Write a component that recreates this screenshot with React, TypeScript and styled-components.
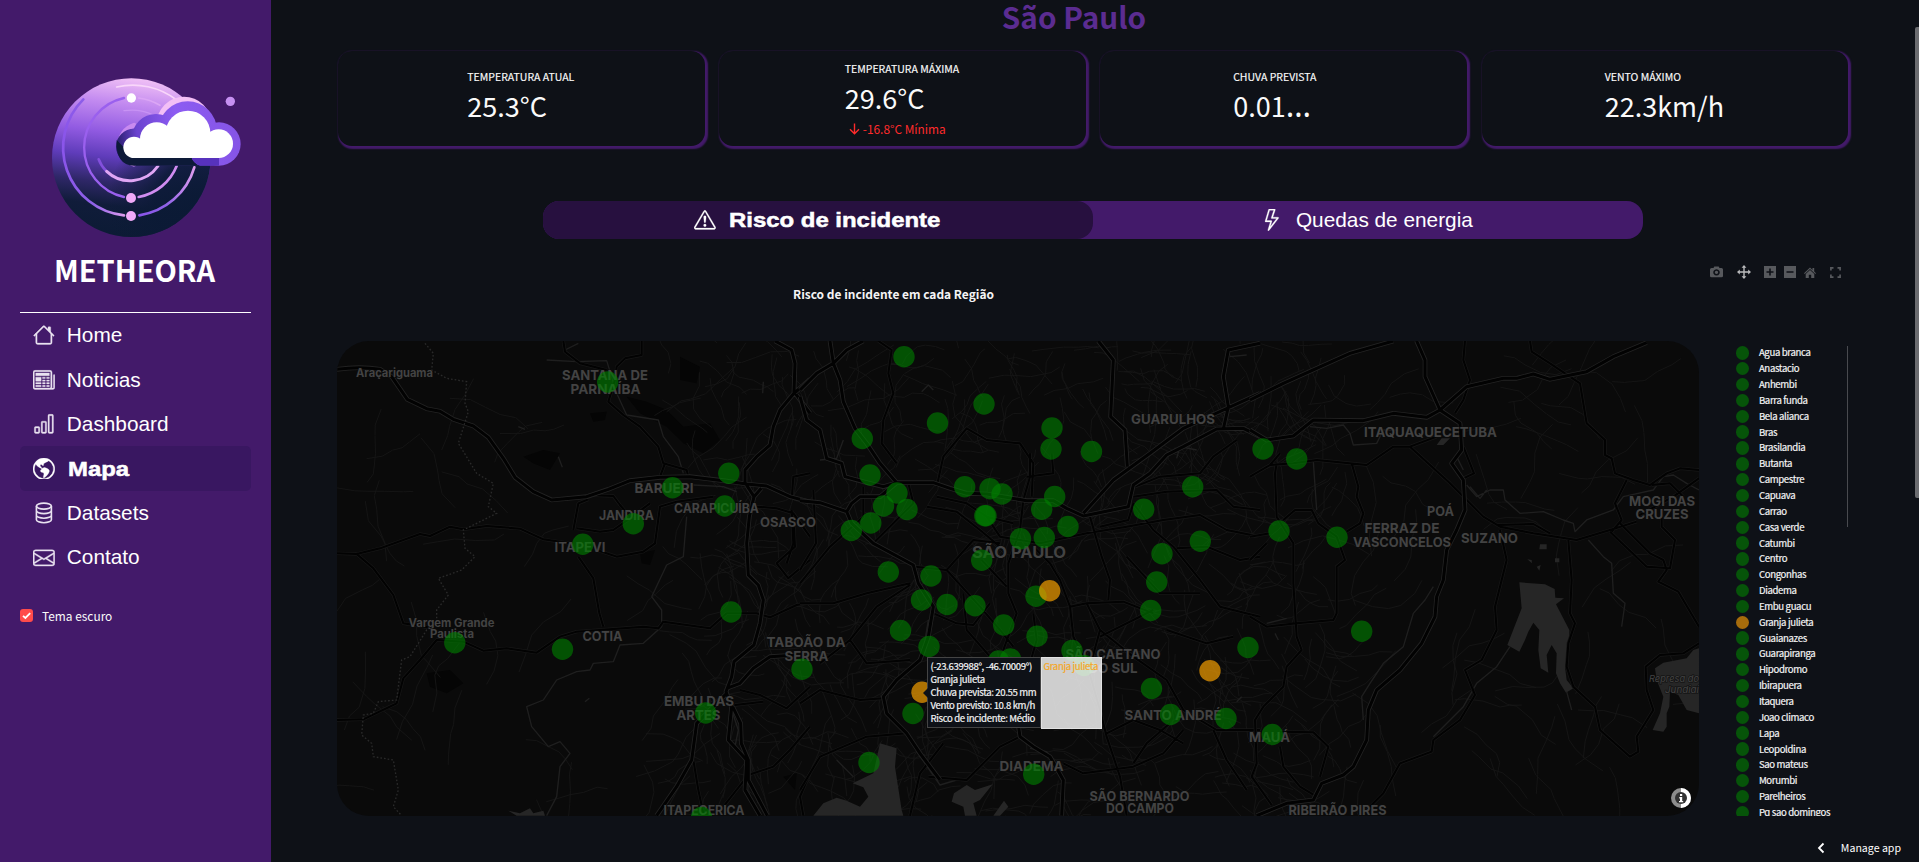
import React from "react";
import styled, { createGlobalStyle } from "styled-components";
import {
  BsBarChart,
  BsEnvelope,
  BsExclamationTriangle,
  BsGlobeAmericas,
  BsLightning,
  BsNewspaper,
} from "react-icons/bs";

const SANS = `"Noto Sans CJK SC", "Noto Sans", sans-serif`;
const ARIAL = `"Liberation Sans", Arial, sans-serif`;

const GlobalStyle = createGlobalStyle`
  * { box-sizing: border-box; }
  body { margin: 0; background: #0e1117; overflow: hidden; color: #fafafa; font-family: ${SANS}; }
`;

const Page = styled.div`
  display: flex;
  width: 1919px;
  height: 862px;
  overflow: hidden;
  background: #0e1117;
`;

/* ---------- sidebar ---------- */

const Sidebar = styled.aside`
  width: 271px;
  flex: none;
  height: 100%;
  background: #431a6a;
  padding-top: 40px;
`;

const Brand = styled.div`
  height: 72px;
  padding: 11px 2px 0 0;
  text-align: center;
  font: 700 29px/36px ${SANS};
  color: #fff;
`;

const BrandName = styled.span`
  display: inline-block;
  white-space: nowrap;
`;

const Nav = styled.nav`
  margin: 0 20px;
  border-top: 1px solid #fff;
`;

const NavItem = styled.a<{ $active?: boolean }>`
  display: flex;
  align-items: center;
  height: 44.45px;
  padding-left: 13px;
  gap: ${(p) => (p.$active ? "13px" : "12px")};
  border-radius: 5px;
  background: ${(p) => (p.$active ? "#391761" : "transparent")};
  color: #fff;
  font: 400 20.8px/24px ${ARIAL};
  svg { flex: none; width: 21.8px; height: 21.8px; color: ${(p) => (p.$active ? "#fff" : "#e9e2f0")}; }
  svg[stroke-width="0"] { stroke-width: 0.25px; }
`;

const Heavy = styled.span`
  display: inline-block;
  font-weight: 700;
  transform: scaleX(1.15);
  transform-origin: 0 50%;
  -webkit-text-stroke: 0.5px #fff;
`;

const ThemeToggle = styled.label`
  display: flex;
  align-items: center;
  gap: 9px;
  margin: 24px 20px 0;
  height: 24px;
  font: 400 11.9px/24px ${SANS};
`;

const Check = styled.span`
  display: flex;
  width: 13px;
  height: 13px;
  border-radius: 3px;
  background: #ff4b4b;
`;

/* ---------- main column ---------- */

const Main = styled.main`
  flex: 1;
  display: flex;
  flex-direction: column;
  padding-left: 66px;
  min-width: 0;
`;

const CityTitle = styled.h2`
  margin: 0;
  width: 1474px;
  height: 51px;
  text-align: center;
  font: 700 29.7px/33px ${SANS};
  color: #5b2c91;
`;

const Metrics = styled.section`
  display: grid;
  grid-template-columns: repeat(4, 366.6px);
  gap: 14.6px;
  width: 1513px;
  height: 95px;
  padding-left: 1px;
`;

const MetricCard = styled.article`
  display: flex;
  align-items: center;
  justify-content: center;
  border-radius: 14px;
  background: #0e1117;
  box-shadow: 1.5px 1.5px 1.5px 0.8px #431a6a;
`;

const MetricBody = styled.div`
  min-width: 101px;
  padding-right: 1px;
`;

const MetricLabel = styled.div`
  font: 400 10.5px/16px ${SANS};
  -webkit-text-stroke: 0.15px #fafafa;
`;

const MetricValue = styled.div`
  font: 400 27px/40px ${SANS};
  margin: 1px 0 3px;
`;

const Ellipsis = styled.span`
  font-family: "Noto Sans", sans-serif;
  font-size: 32px;
  line-height: 1;
`;

const MetricDelta = styled.div`
  display: flex;
  align-items: center;
  gap: 2px;
  padding-left: 3px;
  height: 15px;
  color: #ff2b2b;
  font: 400 11.9px/15px ${SANS};
`;

const Tabs = styled.div`
  display: flex;
  width: 1100px;
  height: 38px;
  margin: 55px 0 0 206px;
  border-radius: 16px;
  background: #431a6a;
`;

const Tab = styled.div<{ $active?: boolean }>`
  flex: none;
  width: 50%;
  display: flex;
  align-items: center;
  justify-content: center;
  gap: 13px;
  border-radius: 16px;
  background: ${(p) => (p.$active ? "#27103f" : "transparent")};
  padding-right: ${(p) => (p.$active ? "29px" : "2px")};
  color: #fff;
  font: 400 20.8px/24px ${ARIAL};
  svg { flex: none; width: 21.8px; height: 21.8px; stroke-width: 0.2px; }
`;

const ChartHead = styled.div`
  display: flex;
  justify-content: space-between;
  width: 1510px;
  height: 102px;
  padding: 26px 6px 0 456px;
`;

const ChartTitle = styled.h3`
  margin: 19px 0 0;
  font: 700 11.95px/20px ${SANS};
  color: #f4f4f5;
  white-space: nowrap;
`;

const ModeBar = styled.div`
  display: flex;
  align-items: center;
  height: 14px;
  svg { display: block; }
`;

const Tool = styled.span<{ $gap?: number; $on?: boolean }>`
  margin-left: ${(p) => p.$gap ?? 0}px;
  color: ${(p) => (p.$on ? "#b9babc" : "#57595d")};
`;

const ChartRow = styled.section`
  display: flex;
  height: 475px;
`;

const MapBox = styled.div`
  position: relative;
  width: 1362px;
  height: 475px;
  flex: none;
  border-radius: 32px;
  overflow: hidden;
  background: #0a0a0a;
`;

const MapText = styled.text<{ $size: number; $italic?: boolean }>`
  font: ${(p) => (p.$italic ? "italic 400" : "700")} ${(p) => p.$size}px Inter, sans-serif;
  fill: #434343;
  stroke: #0a0a0a;
  stroke-width: 1.6px;
  stroke-opacity: 0.6;
  paint-order: stroke;
  text-anchor: middle;
`;

const HoverCard = styled.div`
  position: absolute;
  left: 590px;
  top: 316px;
  display: flex;
  font: 400 9.6px/13px ${SANS};
  letter-spacing: -0.36px;
  white-space: nowrap;
`;

const HoverMain = styled.div`
  width: 113.5px;
  height: 71px;
  padding: 2px 0 0 2.5px;
  border: 1px solid #444;
  background: #0e1117;
  color: #f4f4f5;
  -webkit-text-stroke: 0.2px #f4f4f5;
`;

const HoverName = styled.div`
  width: 61px;
  height: 72px;
  padding: 2px 0 0 2px;
  border: 1px solid #e2e2e2;
  background: rgba(255, 255, 255, 0.8);
  color: #f5a623;
  letter-spacing: -0.35px;
  -webkit-text-stroke: 0.2px #f5a623;
`;

const HoverArrow = styled.span`
  position: absolute;
  left: -4px;
  top: 30.5px;
  border: 5px solid transparent;
  border-left: 0;
  border-right-color: #0e1117;
`;

const Legend = styled.ul`
  list-style: none;
  margin: 4px 0 0 37px;
  padding: 0;
  width: 111px;
  height: 471px;
  overflow: hidden;
`;

const LegendItem = styled.li`
  display: flex;
  align-items: center;
  gap: 9.5px;
  height: 15.85px;
  font: 400 9.6px/15px ${SANS};
  letter-spacing: -0.35px;
  -webkit-text-stroke: 0.2px #f4f4f5;
  white-space: nowrap;
  color: #f4f4f5;
`;

const Dot = styled.i<{ $warn?: boolean }>`
  flex: none;
  width: 13.4px;
  height: 13.4px;
  border-radius: 50%;
  background: ${(p) => (p.$warn ? "#a66c0c" : "#065409")};
`;

const LegendScroll = styled.div`
  width: 1px;
  height: 181px;
  margin-top: 5px;
  background: #484a4f;
`;

const Footer = styled.footer`
  display: flex;
  align-items: center;
  justify-content: flex-end;
  gap: 16px;
  height: 46px;
  padding: 17px 14px 0 0;
  font: 400 10.6px/20px ${SANS};
  color: #fff;
`;

const ScrollTrack = styled.div`
  width: 4px;
  flex: none;
  padding-top: 27px;
`;

const ScrollThumb = styled.div`
  height: 471px;
  border-radius: 2px 0 0 2px;
  background: #6b6c70;
`;

/* ---------- drawings ---------- */

const Logo = () => (
  <svg width="271" height="200" viewBox="0 0 813 600" style={{ display: "block" }}>
    <defs>
      <linearGradient id="disc" x1="0.62" y1="0" x2="0.5" y2="1">
        <stop offset="0" stopColor="#f3c3f6" />
        <stop offset="0.17" stopColor="#c48cf0" />
        <stop offset="0.36" stopColor="#925be2" />
        <stop offset="0.52" stopColor="#5f3cba" />
        <stop offset="0.68" stopColor="#2f2768" />
        <stop offset="0.82" stopColor="#101c3a" />
        <stop offset="1" stopColor="#0c1b35" />
      </linearGradient>
      <radialGradient id="shade" cx="0.95" cy="0.8" r="0.6">
        <stop offset="0" stopColor="#0b1a35" />
        <stop offset="0.5" stopColor="#0b1a35" stopOpacity="0.9" />
        <stop offset="1" stopColor="#0b1a35" stopOpacity="0" />
      </radialGradient>
      <linearGradient id="ring" x1="0" y1="0" x2="1" y2="0">
        <stop offset="0" stopColor="#8a55ea" />
        <stop offset="0.5" stopColor="#8f62e8" />
        <stop offset="1" stopColor="#dd9bee" />
      </linearGradient>
      <linearGradient id="rim" gradientUnits="userSpaceOnUse" x1="348" y1="330" x2="722" y2="290">
        <stop offset="0" stopColor="#241a66" />
        <stop offset="0.18" stopColor="#6a43cf" />
        <stop offset="0.5" stopColor="#8d5cf2" />
        <stop offset="1" stopColor="#8554e6" />
      </linearGradient>
    </defs>
    <circle cx="394" cy="353" r="238" fill="url(#disc)" />
    <circle cx="394" cy="353" r="238" fill="url(#shade)" />
    <g fill="none" strokeLinecap="round">
      <path d="M350 141 A215 215 0 0 1 530 180" stroke="#f9d6fa" strokeWidth="5" />
      <path d="M250 178 A204 204 0 0 0 372 526" stroke="url(#ring)" strokeWidth="8" />
      <path d="M418 526 A204 204 0 0 0 583 382" stroke="url(#ring)" strokeWidth="8" />
      <path d="M372 174 A152 152 0 0 0 372 471" stroke="#9a60ee" strokeWidth="7" />
      <path d="M416 471 A152 152 0 0 0 530 378" stroke="#d08cf0" strokeWidth="8" />
      <path d="M416 174 Q450 178 480 196" stroke="#dba6f5" strokeWidth="5" />
      <path d="M372 212 Q420 205 460 225" stroke="#c893f4" strokeWidth="4" />
      <path d="M296 358 Q304 379 318 392" stroke="#8350dc" strokeWidth="8" />
      <path d="M320 394 A102 102 0 0 0 474 378" stroke="#e0a6f5" strokeWidth="9" />
      <path d="M402 256 A61 61 0 0 0 402 372" stroke="#c88af0" strokeWidth="15" />
    </g>
    <circle cx="552" cy="252" r="82" fill="#f3bff6" />
    <g fill="url(#rim)">
      <circle cx="402" cy="320" r="54" />
      <circle cx="468" cy="294" r="72" />
      <circle cx="563" cy="272" r="88" />
      <circle cx="657" cy="312" r="65" />
      <rect x="402" y="300" width="255" height="76" />
    </g>
    <path d="M350 300 Q346 376 402 377 H600 Q580 370 575 352 H400 Z" fill="#0d1a38" />
    <path d="M600 377 H657 L657 352 H574 Q580 370 600 377Z" fill="#5732bd" />
    <g fill="#fff">
      <circle cx="402" cy="322" r="32" />
      <circle cx="470" cy="297" r="50" />
      <circle cx="564" cy="279" r="67" />
      <circle cx="656" cy="311" r="43" />
      <rect x="402" y="310" width="256" height="44" />
    </g>
    <circle cx="394" cy="174" r="14" fill="#fff" />
    <circle cx="393" cy="474" r="15" fill="#f0aaf8" />
    <circle cx="393" cy="528" r="15" fill="#f0aaf8" />
    <circle cx="691" cy="184" r="14" fill="#c690f2" />
  </svg>
);

const HouseIcon = () => (
  <svg viewBox="0 0 16 16" fill="currentColor" stroke="currentColor" strokeWidth="0">
    <path d="M2 13.5V7h1v6.5a.5.5 0 0 0 .5.5h9a.5.5 0 0 0 .5-.5V7h1v6.5a1.5 1.5 0 0 1-1.5 1.5h-9A1.5 1.5 0 0 1 2 13.5zm11-11V6l-2-2V2.5a.5.5 0 0 1 .5-.5h1a.5.5 0 0 1 .5.5z" />
    <path d="M7.293 1.5a1 1 0 0 1 1.414 0l6.647 6.646a.5.5 0 0 1-.708.708L8 2.207 1.354 8.854a.5.5 0 1 1-.708-.708L7.293 1.5z" />
  </svg>
);

const DatabaseIcon = () => (
  <svg viewBox="0 0 16 16" fill="none" stroke="currentColor" strokeWidth="1.2">
    <ellipse cx="8" cy="3" rx="5.5" ry="2.2" />
    <path d="M2.5 3v10c0 1.2 2.46 2.2 5.5 2.2s5.5-1 5.5-2.2V3M2.5 6.3c0 1.2 2.46 2.2 5.5 2.2s5.5-1 5.5-2.2M2.5 9.7c0 1.2 2.46 2.2 5.5 2.2s5.5-1 5.5-2.2" />
  </svg>
);

const CheckMark = () => (
  <svg width="13" height="13" viewBox="0 0 13 13" fill="none" stroke="#fff" strokeWidth="1.8">
    <path d="M3 6.8 5.4 9 10.2 4.2" />
  </svg>
);

const DownArrow = () => (
  <svg width="13" height="14" viewBox="0 0 13 14" fill="none" stroke="currentColor" strokeWidth="1.4">
    <path d="M6.5 1.5v10M2 7.3l4.5 4.5L11 7.3" />
  </svg>
);

/* Street map geometry, three sheets at 3x scale placed side by side. */
type Sheet = { x: number; major: string[]; mid: string[]; river: string[]; water: string };

const sheets: Sheet[] = [
  {
    x: 330,
    major: [
      "M20 118Q90 108 150 118L185 140L232 208L290 236L330 244L370 268L430 288L475 322L520 385L555 442L610 485L665 510L770 500L835 478L900 452L990 442L1080 440L1180 452L1250 462L1310 468L1380 500L1440 516",
      "M1335 33L1385 60L1395 100L1392 185L1440 250",
      "M1440 148L1390 192L1350 240L1330 290L1320 345L1280 380L1245 420L1245 458L1272 500L1258 560L1250 640L1255 735L1285 765L1300 810L1290 880L1272 945L1212 995L1205 1040L1188 1085L1205 1130L1195 1230L1250 1290L1245 1380L1290 1457",
      "M1272 500L1294 475",
      "M1190 1090L1100 1180L1085 1290L1040 1370L980 1457",
      "M1208 1130L1232 1180L1234 1240L1255 1290L1255 1350L1312 1457",
      "M1190 1075L1230 1060L1270 1015L1320 980L1400 975",
    ],
    mid: [
      "M20 1170L100 1168L200 1120L220 1045L270 990L320 930L400 935L460 962L530 955L620 968L690 920L740 905L940 890L985 895L1000 875L1140 895L1190 850L1280 850L1320 862L1400 825L1440 818",
      "M20 670L80 672L150 655L270 612L300 618L360 590L400 598L470 588L570 596L640 628L720 640",
      "M80 672L130 715L190 795L220 880L310 895",
      "M745 680L790 745L808 850L820 890",
      "M730 600L745 520L775 508M775 495L850 498L870 525L900 560",
      "M740 595L810 605L850 600L900 565L960 520",
      "M700 33L705 65L750 100L830 120M935 33L935 75L885 85L860 110L855 150L835 215L880 255L930 290L985 350L1000 400L1070 420L1075 440",
      "M1385 540L1390 640L1370 700M1440 430L1390 440L1385 510",
      "M800 660L860 680L940 665L975 640L990 530L1040 515L1150 500",
      "M1280 530L1340 535L1390 550L1440 620M1390 560L1395 650L1340 700L1375 745L1440 690",
      "M1230 1080L1290 1095L1370 1135L1440 1070M1215 1125L1300 1115M1440 1190L1380 1260L1330 1310L1255 1335L1180 1430",
      "M1090 1290L1105 1380L1120 1450M1440 1330L1410 1400L1420 1457M990 440L1005 400",
    ],
    river: [
      "M650 90L740 95L830 92L860 190L890 255L985 270L1000 320L1045 380L1060 430",
      "M965 800L1010 705L1060 680L1070 560M965 800L995 840L995 890L940 940L870 945L850 995L790 1000L780 1020L740 1025L680 1050L640 1110L590 1130L605 1190L655 1250L690 1235L720 1270L690 1310L680 1400L650 1457",
      "M705 60L745 40M1090 465L1180 470L1220 485M1205 1140L1225 1200L1215 1250M1260 1350L1285 1420",
      "M565 290L585 298M685 380L697 412M1300 155L1298 190M765 1115L778 1105",
    ],
    water: "M535 1442L570 1450L600 1435L610 1450L640 1442L645 1457H560Z",
  },
  {
    x: 800,
    major: [
      "M90 33L100 100L120 150L130 215L165 295L200 340L240 400L290 458",
      "M0 180L50 130L100 100L140 60L190 33",
      "M0 512L60 518L140 545L155 520L180 500L240 500L290 458L400 458L450 475L500 490L560 492L680 512L760 512L800 535L850 558L985 530L1000 465L1050 430L1100 375L1150 350L1250 297L1330 295L1380 320",
      "M140 545L155 580L220 640L340 705L355 760L400 830L385 920L360 990L290 1050L250 1100L260 1150L320 1210L360 1270L420 1350",
      "M850 550L940 450L1050 370L1150 295L1270 240L1380 190",
      "M895 33L940 90L932 260L975 300L982 410",
      "M1380 40L1285 60L1270 140L1285 230L1270 297",
      "M0 200L20 270L60 300L80 385L125 400L135 440L190 455L250 470L290 458",
      "M650 1150L660 1220L700 1250L750 1280L790 1350L785 1457",
    ],
    mid: [
      "M690 370L690 440L670 510L660 600L625 700L625 790L650 850L610 960",
      "M235 33L275 60L265 130L280 190L250 270L245 340L290 400",
      "M410 470L430 380L500 295L560 330L660 340L700 400L695 500",
      "M870 560L905 680L930 750L925 810",
      "M700 650L750 700L780 750L810 830L860 820L970 815L1060 850",
      "M560 560L600 620L720 640L860 610L980 590L1090 570L1200 555L1280 600L1380 620",
      "M1000 500L1100 485L1250 480L1300 530L1380 540M1005 470L1080 440L1200 430L1240 380L1310 330",
      "M1000 520L1060 600L1120 650L1200 750L1260 830L1380 860M1130 655L1220 650L1320 690L1380 680",
      "M810 830L820 920L860 1000L900 1140L920 1220L960 1340L980 1457",
      "M0 820L100 820L200 790L330 760M0 760L90 650L190 560L190 470",
      "M0 1380L60 1280L200 1220L320 1210M0 1120L60 1080L180 1110L250 1105",
      "M900 900L1000 980L1100 1050L1150 1140L1250 1200L1380 1200",
      "M385 1340L500 1350L600 1250L660 1220",
      "M410 500L500 520L560 560L640 580M380 530L470 545L540 600L600 650",
      "M345 710L440 720L520 630L600 640M440 720L540 830L600 900L640 950M545 690L620 770",
      "M400 850L470 880L520 885L570 820M490 790L500 900L570 980",
      "M150 930L230 830L330 765M60 1000L150 930L200 1000L330 990",
      "M700 850L710 930L690 1000L660 1060L650 1150M860 820L900 900L870 1010",
      "M920 1210L1000 1170L1080 1200L1150 1240M1150 1200L1090 1270L1000 1310L850 1330L790 1300",
      "M40 480L48 640L0 720M325 460L340 520L300 560L220 640M680 440L760 430L755 370",
      "M1240 1200L1280 1290L1340 1380M1000 1300L1040 1240L1110 1180M430 1240L360 1330L330 1457",
      "M980 680L1080 790L1200 790M900 590L985 570L1000 520M900 920L1060 840M1100 900L1220 940L1300 920",
    ],
    river: [
      "M350 1265L420 1365L470 1350M1130 385L1140 350L1190 360M365 185L385 165L400 180M1310 1115L1325 1100M690 1255L740 1265L770 1310",
      "M1290 80L1340 75M1110 370L1150 345M385 870L375 930M130 330L110 385L60 390M110 1290L160 1340",
    ],
    water:
      "M240 1240L290 1255L285 1310L305 1440L310 1457H40L70 1420L110 1403L140 1412L180 1430L205 1400L190 1372L158 1360L220 1330ZM500 1365L525 1380L578 1363L540 1410L520 1420L530 1457H495L490 1430L455 1415L462 1390ZM580 1457L612 1412L625 1430L600 1457Z",
  },
  {
    x: 1250,
    major: [
      "M0 210L100 160L300 70L430 33",
      "M0 300L50 330L130 318L190 270L340 272L430 250L530 262L570 240L650 170L760 145L800 145L850 132L900 148L1010 125L1090 80L1190 38",
      "M500 33L525 90L525 140L570 240L630 280L635 360L605 400L640 450L645 540L620 600L590 660L580 750L560 800L555 860L515 940L450 1020L380 1080L355 1140L350 1230L310 1310L280 1335L215 1360L190 1410L110 1420L20 1457",
    ],
    mid: [
      "M645 33L640 90L660 150L640 210L615 250",
      "M840 33L845 65L900 100L990 160L1010 280L1065 330L1065 375L1085 385L1095 430L1150 450L1200 465L1250 430L1290 415L1347 420",
      "M480 350L600 460L700 560L750 590L850 610L980 630L1080 600L1160 575M740 585L850 582L900 610",
      "M60 405L130 400L200 390L350 405L430 350L480 350L560 320M640 445L672 430L640 350",
      "M955 630L965 750L960 850L975 880L955 940L950 1010L970 1070L1035 1130L1050 1200L1140 1280L1165 1265L1160 1220L1210 1140L1190 1080L1187 1010L1230 975L1300 970L1347 940",
      "M750 600L770 690L735 830L740 900L695 990L645 1020L675 1095L630 1170L550 1230L545 1265L450 1300L400 1390L350 1440",
      "M1080 605L1190 710L1260 715L1275 630L1235 590L1235 540M1110 580L1200 670L1240 690L1250 720L1225 755L1285 785L1347 890",
      "M1130 450L1095 520L1115 570L1085 605M1205 465L1260 460L1300 500M1347 445L1270 500L1160 560",
      "M80 400L75 430L80 560L130 640L130 760L140 920L155 960L110 1010L100 1070L40 1130L15 1170L20 1300L5 1340L65 1425",
      "M100 570L135 540L185 540L205 580L260 620L285 690L260 710L260 850L250 870L140 880L50 890L0 860",
      "M90 1205L190 1207L235 1250L210 1340M90 1250L100 1310L150 1370L200 1400",
      "M305 400L325 470L320 500L340 550L330 580L290 605M0 440L60 405L90 370M0 620L60 610M0 690L50 640",
    ],
    river: [
      "M550 770L525 810L490 850L460 950L400 1000L360 1060L335 1100L340 1170",
      "M180 290L230 295L280 285L300 310L310 345L380 340L400 300L440 300",
      "M650 465L680 500L720 480L760 480L765 510L810 550L880 545L940 570L970 580L975 605L1010 570L1090 540L1120 500L1210 480L1240 440L1270 435L1310 460L1347 480",
      "M1015 630L1060 680L1085 700L1090 790L1125 820L1115 890M780 950L740 1010L680 1060L640 1130L550 1220M950 1085L965 1140M190 395L200 540",
      "M660 470L690 505L710 480M50 880L110 865M75 910L85 930M620 380L640 420",
    ],
    water:
      "M808 757L885 763L914 777L916 803L942 805L918 823L958 900L957 960L945 1010L950 1050L970 1075L948 1088L930 1060L918 1030L920 970L905 945L890 975L895 1028L872 1015L865 960L868 900L850 878L835 905L825 930L808 965L772 945L815 835ZM1215 1015L1240 998L1310 985L1330 960L1347 955V1150L1310 1140L1285 1095L1260 1085L1258 1130L1250 1150L1250 1190L1240 1205L1208 1200L1230 1150L1240 1100L1220 1050ZM870 643H890V658H868ZM915 685H928V697H915ZM832 688L845 690L846 700ZM860 710L872 705L868 722ZM560 345L575 325L600 325L580 345Z",
  },
];

/* Deterministic side streets: jittered polylines, denser over the urban core. */
const sideStreets = (() => {
  let seed = 11;
  const rnd = () => {
    seed = (seed * 16807) % 2147483647;
    return seed / 2147483647;
  };
  let d = "";
  for (let i = 0; i < 760; i++) {
    const core = i < 600;
    let x = core ? 700 + rnd() * 640 : 340 + rnd() * 1350;
    let y = 341 + rnd() * 475;
    let a = rnd() * Math.PI * 2;
    d += `M${x.toFixed(1)} ${y.toFixed(1)}`;
    for (let k = 0; k < 5; k++) {
      a += (rnd() - 0.5) * 1.1;
      const len = core ? 6 + rnd() * 9 : 9 + rnd() * 12;
      x += Math.cos(a) * len;
      y += Math.sin(a) * len;
      d += `L${x.toFixed(1)} ${y.toFixed(1)}`;
    }
  }
  return d;
})();

const BOUNDARY =
  "M285 40L310 70L305 120L350 145L410 155L405 220L415 245L385 340L440 430L490 460L475 530L500 550L430 585L400 600L405 655L435 680L395 720L325 745L355 795L320 840L320 880L290 900L240 980L215 990L200 1110L145 1115L130 1150L100 1155L95 1215L125 1240L130 1280L190 1290L205 1380L190 1430L215 1457";

const WOODS =
  "M580 380L640 360L690 370L660 420L610 400ZM890 200L950 215L1010 240L1060 290L1140 280L1170 330L1120 370L1060 340L1010 290L930 250ZM290 1030L360 1020L400 1060L350 1090L300 1070ZM1050 80L1110 110L1100 160L1050 150ZM780 250L830 245L825 270L790 275ZM930 670L975 660L960 705L935 700ZM1360 1340L1400 1330L1395 1380Z";

/* label: text, centre x, baseline, width, size, italic */
type Label = [string, number, number, number, number, boolean?];
const labels: Label[] = [
  ["Araçariguama", 394.5, 376.5, 77, 11.5],
  ["SANTANA DE", 605, 380, 86, 13.5],
  ["PARNAÍBA", 605.5, 393.8, 70, 13.5],
  ["BARUERI", 664, 492.5, 59, 13.5],
  ["CARAPICUÍBA", 716.5, 513, 85, 13],
  ["JANDIRA", 626.5, 519.5, 55, 13],
  ["ITAPEVI", 580, 552, 51, 13],
  ["OSASCO", 788, 526.5, 56, 13.5],
  ["Vargem Grande", 451.5, 627, 86, 11.5],
  ["Paulista", 452, 638, 44, 11.5],
  ["COTIA", 602.5, 640.5, 40, 13.5],
  ["TABOÃO DA", 806, 647, 79, 13.5],
  ["SERRA", 806.5, 661, 44, 13.5],
  ["EMBU DAS", 699, 706, 70, 13.5],
  ["ARTES", 698.5, 720, 44, 13.5],
  ["ITAPECERICA", 704, 815, 81, 13],
  ["SÃO PAULO", 1019, 557.5, 94, 16],
  ["GUARULHOS", 1173, 423.5, 84, 13.5],
  ["SÃO CAETANO", 1113, 659, 95, 13.5],
  ["DO SUL", 1113, 673, 49, 13.5],
  ["SANTO ANDRÉ", 1173, 720, 97, 13.5],
  ["DIADEMA", 1031.5, 771, 64, 13.5],
  ["SÃO BERNARDO", 1139.5, 800.5, 100, 13.5],
  ["DO CAMPO", 1140, 813, 68, 13.5],
  ["MAUÁ", 1269.5, 741.5, 41, 13.5],
  ["ITAQUAQUECETUBA", 1430.5, 436.5, 133, 13.5],
  ["POÁ", 1440.5, 515.5, 27, 13.5],
  ["FERRAZ DE", 1402, 532.5, 75, 13.5],
  ["VASCONCELOS", 1402, 546.5, 98, 13.5],
  ["SUZANO", 1489.5, 543, 57, 13.5],
  ["MOGI DAS", 1662, 505.5, 66, 13.5],
  ["CRUZES", 1662, 519, 53, 13.5],
  ["RIBEIRÃO PIRES", 1337.5, 814.5, 98, 13.5],
  ["Represa do", 1674, 681.5, 50, 9.5, true],
  ["Jundiaí", 1682, 692.5, 34, 9.5, true],
];

const green: number[][] = [
  [607.7, 382], [728.8, 473.3], [672.5, 487.7], [724.8, 506], [633.3, 523.7], [582.8, 544.3], [731, 612],
  [454.8, 642.7], [562.5, 649.3], [802, 669.3], [705.7, 713], [701.5, 817.5],
  [904, 356.7], [984, 404], [937.5, 423], [862.3, 438.5], [1052, 428], [1051, 449], [1091.5, 451.5],
  [870, 475], [897, 493], [883.5, 506], [907, 509.5], [870.8, 523], [851.3, 530.5],
  [964.7, 486.7], [990, 488.7], [1002, 494], [984.8, 515.7], [986, 515.7], [1054.7, 496.5], [1041.7, 509.3],
  [1068, 526.5], [1020.5, 538.7], [1044.3, 537.5], [981.7, 560.3], [888.3, 572], [931, 576], [921.5, 600],
  [947, 604.5], [975, 605.7], [1036, 596.3], [1003.7, 625], [1037, 636.3], [900.5, 630.5], [929, 646.5],
  [998.5, 661], [1010.5, 659], [1072, 650.5], [1084, 665.5], [913, 713.5], [869, 762.5], [1033.7, 774.3],
  [1143.7, 509.3], [1192.7, 486.7], [1162, 553.7], [1200.3, 541.3], [1156.7, 582], [1150.7, 610.5],
  [1248, 647.5], [1151.5, 688.5], [1170.5, 714.5], [1226, 718.5],
  [1263, 449], [1296.7, 459], [1279, 531], [1337, 537.3], [1361.7, 631.3], [1272.3, 734.5],
];
const orange: number[][] = [[1049.7, 590.7], [1210, 670.7], [922, 692.3]];

const RiskMap = () => (
  <svg width="1362" height="475" viewBox="337 341 1362 475" style={{ display: "block" }}>
    <path d={WOODS} transform="translate(330 330) scale(0.33333)" fill="#050505" />
    <path d={sideStreets} fill="none" stroke="#161616" strokeWidth="0.9" />
    {sheets.map((s) => (
      <g key={s.x} transform={`translate(${s.x} 330) scale(0.33333)`} fill="none" strokeLinejoin="round">
        <path d={s.water} fill="#262626" />
        <path d={s.river.join("")} stroke="#1f1f1f" strokeWidth="4" />
        <path d={s.mid.join("")} stroke="#171717" strokeWidth="10" />
        <path d={s.mid.join("")} stroke="#020202" strokeWidth="6" />
        <path d={s.major.join("")} stroke="#232323" strokeWidth="14" />
        <path d={s.major.join("")} stroke="#020202" strokeWidth="9" />
      </g>
    ))}
    <path
      d={BOUNDARY}
      transform="translate(330 330) scale(0.33333)"
      fill="none"
      stroke="#2a2a2a"
      strokeWidth="4"
      strokeDasharray="5 6"
    />
    {labels.map(([t, x, y, w, size, italic]) => (
      <MapText key={t} x={x} y={y} $size={size} $italic={italic} textLength={w} lengthAdjust="spacingAndGlyphs">
        {t}
      </MapText>
    ))}
    <g fill="#008000" fillOpacity="0.62">
      {green.map(([x, y], i) => (
        <circle key={i} cx={x} cy={y} r="10.7" />
      ))}
    </g>
    <g fill="#ffa500" fillOpacity="0.67">
      {orange.map(([x, y], i) => (
        <circle key={i} cx={x} cy={y} r="10.7" />
      ))}
    </g>
    <circle cx="1681" cy="798" r="10" fill="#8d8d8d" />
    <path d="M1681 788A10 10 0 0 1 1681 808Z" fill="#fff" />
    <circle cx="1681" cy="798" r="6" fill="#333" />
    <path d="M1680 794h2.2v2h-2.2zM1679.3 797h2.9v4h1v1.3h-4.2V801h1v-2.6h-.7z" fill="#fff" />
  </svg>
);

const nav = [
  { label: "Home", icon: <HouseIcon /> },
  { label: "Noticias", icon: <BsNewspaper /> },
  { label: "Dashboard", icon: <BsBarChart /> },
  { label: "Mapa", icon: <BsGlobeAmericas />, active: true },
  { label: "Datasets", icon: <DatabaseIcon /> },
  { label: "Contato", icon: <BsEnvelope /> },
];

const metrics = [
  { label: "TEMPERATURA ATUAL", value: "25.3°C" },
  { label: "TEMPERATURA MÁXIMA", value: "29.6°C", delta: "-16.8°C Mínima" },
  { label: "CHUVA PREVISTA", value: "0.01", cut: true },
  { label: "VENTO MÁXIMO", value: "22.3km/h" },
];

const regions = [
  "Agua branca", "Anastacio", "Anhembi", "Barra funda", "Bela alianca", "Bras", "Brasilandia", "Butanta",
  "Campestre", "Capuava", "Carrao", "Casa verde", "Catumbi", "Centro", "Congonhas", "Diadema", "Embu guacu",
  "Granja julieta", "Guaianazes", "Guarapiranga", "Hipodromo", "Ibirapuera", "Itaquera", "Joao climaco", "Lapa",
  "Leopoldina", "Sao mateus", "Morumbi", "Parelheiros", "Pq sao domingos",
];

export default function App() {
  return (
    <>
      <GlobalStyle />
      <Page>
        <Sidebar>
          <Logo />
          <Brand>
            <BrandName>METHEORA</BrandName>
          </Brand>
          <Nav>
            {nav.map((n) => (
              <NavItem key={n.label} $active={n.active}>
                {n.icon}
                {n.active ? <Heavy>{n.label}</Heavy> : n.label}
              </NavItem>
            ))}
          </Nav>
          <ThemeToggle>
            <Check>
              <CheckMark />
            </Check>
            Tema escuro
          </ThemeToggle>
        </Sidebar>
        <Main>
          <CityTitle>São Paulo</CityTitle>
          <Metrics>
            {metrics.map((m) => (
              <MetricCard key={m.label}>
                <MetricBody>
                  <MetricLabel>{m.label}</MetricLabel>
                  <MetricValue>
                    {m.value}
                    {m.cut && <Ellipsis>…</Ellipsis>}
                  </MetricValue>
                  {m.delta && (
                    <MetricDelta>
                      <DownArrow />
                      {m.delta}
                    </MetricDelta>
                  )}
                </MetricBody>
              </MetricCard>
            ))}
          </Metrics>
          <Tabs>
            <Tab $active>
              <BsExclamationTriangle />
              <Heavy>Risco de incidente</Heavy>
            </Tab>
            <Tab>
              <BsLightning />
              Quedas de energia
            </Tab>
          </Tabs>
          <ChartHead>
            <ChartTitle>Risco de incidente em cada Região</ChartTitle>
            <ModeBar>
              <Tool>
                <svg width="13" height="12" viewBox="0 0 13 12" fill="currentColor" fillRule="evenodd">
                  <path d="M1.5 2H3.5L4.3.5H8.7L9.5 2H11.5Q13 2 13 3.5V10Q13 11.3 11.5 11.3H1.5Q0 11.3 0 10V3.5Q0 2 1.5 2ZM6.5 3.2a3.2 3.2 0 1 0 .01 0ZM6.5 4.8a1.6 1.6 0 1 1-.01 0Z" />
                </svg>
              </Tool>
              <Tool $gap={14} $on>
                <svg width="14" height="14" viewBox="0 0 14 14" fill="currentColor">
                  <path d="M7 0 9.4 2.8H7.7V6.3H11.2V4.6L14 7 11.2 9.4V7.7H7.7V11.2H9.4L7 14 4.6 11.2H6.3V7.7H2.8V9.4L0 7 2.8 4.6V6.3H6.3V2.8H4.6Z" />
                </svg>
              </Tool>
              <Tool $gap={13}>
                <svg width="12" height="12" viewBox="0 0 12 12" fill="currentColor" fillRule="evenodd">
                  <path d="M0 0H12V12H0ZM5.2 2.5V5.2H2.5V6.8H5.2V9.5H6.8V6.8H9.5V5.2H6.8V2.5Z" />
                </svg>
              </Tool>
              <Tool $gap={8}>
                <svg width="12" height="12" viewBox="0 0 12 12" fill="currentColor" fillRule="evenodd">
                  <path d="M0 0H12V12H0ZM2.5 5.2V6.8H9.5V5.2Z" />
                </svg>
              </Tool>
              <Tool $gap={8}>
                <svg width="12" height="11" viewBox="0 0 12 11" fill="currentColor">
                  <path d="M6 .5 8.5 2.9V1H10.2V4.5L12 6.2 11.3 7 6 2 .7 7 0 6.2ZM6 3 10.3 7V11H7.2V7.8H4.8V11H1.7V7Z" />
                </svg>
              </Tool>
              <Tool $gap={14}>
                <svg width="11" height="11" viewBox="0 0 11 11" fill="none" stroke="currentColor" strokeWidth="1.7">
                  <path d="M.9 3.5V.9H3.5M7.5.9H10.1V3.5M10.1 7.5V10.1H7.5M3.5 10.1H.9V7.5" />
                </svg>
              </Tool>
            </ModeBar>
          </ChartHead>
          <ChartRow>
            <MapBox>
              <RiskMap />
              <HoverCard>
                <HoverMain>
                  (-23.639988°, -46.70009°)
                  <br />
                  Granja julieta
                  <br />
                  Chuva prevista: 20.55 mm
                  <br />
                  Vento previsto: 10.8 km/h
                  <br />
                  Risco de incidente: Médio
                </HoverMain>
                <HoverName>Granja julieta</HoverName>
                <HoverArrow />
              </HoverCard>
            </MapBox>
            <Legend>
              {regions.map((r) => (
                <LegendItem key={r}>
                  <Dot $warn={r === "Granja julieta"} />
                  {r}
                </LegendItem>
              ))}
            </Legend>
            <LegendScroll />
          </ChartRow>
          <Footer>
            <svg width="8" height="12" viewBox="0 0 8 12" fill="none" stroke="#fff" strokeWidth="1.8">
              <path d="M6.5 1.5 2 6l4.5 4.5" />
            </svg>
            Manage app
          </Footer>
        </Main>
        <ScrollTrack>
          <ScrollThumb />
        </ScrollTrack>
      </Page>
    </>
  );
}
